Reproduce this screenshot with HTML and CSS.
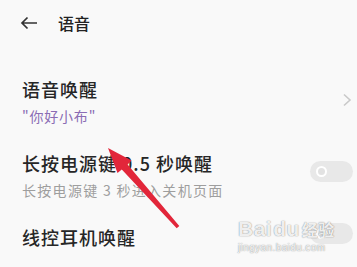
FILE: index.html
```html
<!DOCTYPE html>
<html lang="zh">
<head>
<meta charset="utf-8">
<link rel="stylesheet" href="styles.css">
</head>
<body>
<div class="page">
  <header class="header">
    <svg class="back" width="18" height="14" viewBox="0 0 18 14"><path d="M17 7H2M7.5 1.5L2 7l5.5 5.5" fill="none" stroke="#333" stroke-width="1.7"/></svg>
    <span class="htitle">语音</span>
  </header>
  <div class="list">
    <div class="item">
      <div class="texts">
        <div class="title">语音唤醒</div>
        <div class="sub purple">"你好小布"</div>
      </div>
      <svg class="chev" width="10" height="14" viewBox="0 0 10 14"><path d="M2 1.5L8 7l-6 5.5" fill="none" stroke="#c9c9c9" stroke-width="1.6"/></svg>
    </div>
    <div class="item">
      <div class="texts">
        <div class="title">长按电源键 0.5 秒唤醒</div>
        <div class="sub">长按电源键 3 秒进入关机页面</div>
      </div>
      <div class="toggle t1"><span class="knob"></span></div>
    </div>
    <div class="item">
      <div class="texts">
        <div class="title">线控耳机唤醒</div>
      </div>
      <div class="toggle t2"><span class="knob"></span></div>
    </div>
  </div>
  <div class="wm">
    <div class="wm-main">Bai<span class="paw">du</span><span class="wm-cn">经验</span></div>
    <div class="wm-url">jingyan.baidu.com</div>
  </div>
  <svg class="arrow" width="357" height="267" viewBox="0 0 357 267">
    <polygon points="108,148 131.5,160.5 127.6,164.6 179.3,226 176.7,228.2 121.8,169.4 117.5,173" fill="#e2263a"/>
  </svg>
</div>
</body>
</html>
```
FILE: styles.css
```css
html, body {
  margin: 0;
  padding: 0;
}
body {
  background: #f9f9f9;
  font-family: "Noto Sans CJK SC", "Noto Sans", sans-serif;
  color: #222;
}
.page {
  position: relative;
  width: 357px;
  height: 267px;
  overflow: hidden;
}
.header {
  height: 45px;
  display: flex;
  align-items: center;
  padding-left: 20px;
}
.back {
  display: block;
}
.htitle {
  margin-left: 20px;
  font-size: 16px;
  font-weight: 500;
  line-height: 20px;
  color: #222;
}
.list {
  display: flex;
  flex-direction: column;
  gap: 29px;
  padding-top: 34px;
}
.item {
  display: flex;
  justify-content: space-between;
  align-items: flex-start;
  padding: 0 4px 0 22px;
}
.texts {
  display: flex;
  flex-direction: column;
  gap: 9px;
}
.title {
  font-size: 18px;
  line-height: 20px;
  letter-spacing: 1px;
  font-weight: 500;
  color: #262626;
}
.sub {
  font-size: 14px;
  line-height: 16px;
  letter-spacing: 1.3px;
  color: #9e9e9e;
}
.sub.purple {
  color: #8a6cb4;
  letter-spacing: 0.8px;
}
.chev {
  display: block;
  margin-top: 14px;
  margin-right: 1px;
}
.toggle {
  width: 43px;
  height: 21px;
  border-radius: 11px;
  background: #e8e8e8;
  display: flex;
  align-items: center;
  padding-left: 6px;
  box-sizing: border-box;
}
.t1 { margin-top: 8px; }
.t2 { margin-top: -4px; }
.knob {
  width: 7px;
  height: 7px;
  border-radius: 50%;
  border: 2.5px solid #fff;
  background: #e2e2e2;
}
.wm {
  position: absolute;
  left: 238px;
  top: 216px;
  color: rgba(255, 255, 255, 0.9);
  text-shadow: 0 0 1px rgba(0, 0, 0, 0.45), 0 0 2px rgba(0, 0, 0, 0.15);
  font-family: "Liberation Sans", sans-serif;
}
.wm-main {
  font-size: 21px;
  font-weight: bold;
  line-height: 26px;
  letter-spacing: 0.5px;
}
.paw {
  margin-left: 1px;
}
.wm-cn {
  font-family: "Noto Sans CJK SC", sans-serif;
  font-size: 16px;
  margin-left: 2px;
}
.wm-url {
  font-size: 10px;
  line-height: 11px;
  letter-spacing: 0.4px;
}
.arrow {
  position: absolute;
  left: 0;
  top: 0;
}
```
